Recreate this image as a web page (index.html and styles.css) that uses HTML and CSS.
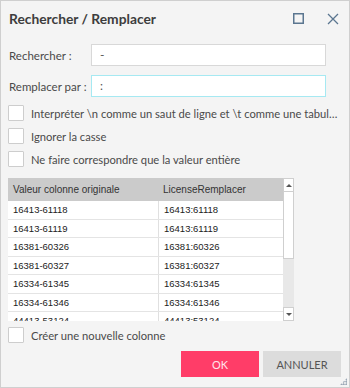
FILE: index.html
```html
<!DOCTYPE html>
<html lang="fr">
<head>
  <meta charset="UTF-8" />
  <title>Rechercher / Remplacer</title>
  <link rel="stylesheet" href="styles.css">
</head>
<body>
  <div class="dialog">
    <div class="titlebar">
      <h1>Rechercher / Remplacer</h1>
      <div class="win-btns">
        <svg width="11" height="11" viewBox="0 0 11 11"><rect x="0.75" y="0.75" width="9.5" height="9.5" fill="none" stroke="#5b7690" stroke-width="1.5"/></svg>
        <svg width="12" height="12" viewBox="0 0 12 12"><path d="M1 1L11 11M11 1L1 11" stroke="#5b7690" stroke-width="1.3"/></svg>
      </div>
    </div>

    <div class="field">
      <label>Rechercher :</label>
      <div class="input">-</div>
    </div>
    <div class="field">
      <label>Remplacer par :</label>
      <div class="input focus">:</div>
    </div>

    <div class="checks">
      <div class="check"><span class="box"></span><span class="txt">Interpréter \n comme un saut de ligne et \t comme une tabulation</span></div>
      <div class="check"><span class="box"></span><span class="txt">Ignorer la casse</span></div>
      <div class="check"><span class="box"></span><span class="txt">Ne faire correspondre que la valeur entière</span></div>
    </div>

    <div class="grid-wrap">
      <div class="grid">
        <div class="row head"><div>Valeur colonne originale</div><div>LicenseRemplacer</div></div>
        <div class="row"><div>16413-61118</div><div>16413:61118</div></div>
        <div class="row"><div>16413-61119</div><div>16413:61119</div></div>
        <div class="row"><div>16381-60326</div><div>16381:60326</div></div>
        <div class="row"><div>16381-60327</div><div>16381:60327</div></div>
        <div class="row"><div>16334-61345</div><div>16334:61345</div></div>
        <div class="row"><div>16334-61346</div><div>16334:61346</div></div>
        <div class="row"><div>44413-53124</div><div>44413:53124</div></div>
      </div>
      <div class="scrollbar">
        <div class="arrow up"></div>
        <div class="thumb"></div>
        <div class="track"></div>
        <div class="arrow down"></div>
      </div>
    </div>

    <div class="check new-col"><span class="box"></span><span class="txt">Créer une nouvelle colonne</span></div>

    <div class="actions">
      <button class="ok">OK</button>
      <button class="cancel">ANNULER</button>
    </div>
    <div class="grip"></div>
  </div>
</body>
</html>
```

FILE: styles.css
```css
* {
  margin: 0;
  padding: 0;
  box-sizing: border-box;
}

body {
  width: 350px;
  height: 388px;
  font-family: Lato, "Open Sans", sans-serif;
  color: #444;
  background: #fff;
}

.dialog {
  position: relative;
  width: 350px;
  height: 388px;
  border: 1px solid #cfcfcf;
  background: #f4f4f4;
  padding: 0 7px;
}

.titlebar {
  display: flex;
  align-items: center;
  justify-content: space-between;
  height: 35px;
  padding: 0 0 0 1px;
}

.titlebar h1 {
  font-size: 13.8px;
  font-weight: 700;
  color: #3d3d3d;
}

.win-btns {
  display: flex;
  align-items: center;
  gap: 23px;
  padding-right: 3px;
}

.field {
  display: flex;
  align-items: center;
  margin-top: 8px;
}

.field + .field {
  margin-top: 9px;
}

.field label {
  width: 83px;
  padding-left: 1px;
  font-size: 11.5px;
  color: #4a4a4a;
  white-space: nowrap;
}

.input {
  width: 235px;
  height: 22px;
  background: #fff;
  border: 1px solid #d8d8d8;
  font-size: 12px;
  line-height: 20px;
  padding-left: 8px;
  color: #555;
}

.input.focus {
  border-color: #a6e9f2;
}

.checks {
  display: flex;
  flex-direction: column;
  gap: 7px;
  margin-top: 8px;
}

.check {
  display: flex;
  align-items: center;
  gap: 7px;
  height: 16px;
}

.check .box {
  flex: none;
  width: 16px;
  height: 16px;
  background: #fff;
  border: 1px solid #cdcdcd;
  border-radius: 1px;
}

.check .txt {
  font-size: 11.2px;
  color: #4a4a4a;
  white-space: nowrap;
  overflow: hidden;
  text-overflow: ellipsis;
  width: 310px;
}

.grid-wrap {
  display: flex;
  margin-top: 11px;
  height: 143px;
  width: 286px;
}

.grid {
  width: 275px;
  overflow: hidden;
  font-family: "Liberation Sans", Arial, sans-serif;
  font-size: 9.5px;
  color: #222;
}

.row {
  display: grid;
  grid-template-columns: 150px 1fr;
  height: 18.5px;
  background: #fff;
  border-bottom: 1.5px solid #e4e4e4;
}

.row > div {
  display: flex;
  align-items: center;
  padding-left: 5px;
}

.row > div + div {
  border-left: 1px solid #e0e0e0;
}

.row.head {
  height: 23px;
  background: #cbcbcb;
  border-bottom: none;
  font-size: 10px;
  color: #333;
}

.row.head > div + div {
  border-left: none;
}

.scrollbar {
  width: 11px;
  margin-left: 0.5px;
  display: flex;
  flex-direction: column;
  background: #e8e8e8;
}

.arrow {
  height: 14px;
  background: #fff;
  border: 1px solid #cfcfcf;
  display: flex;
  align-items: center;
  justify-content: center;
}

.arrow::after {
  content: "";
  border-left: 3px solid transparent;
  border-right: 3px solid transparent;
}

.arrow.up::after {
  border-bottom: 3px solid #555;
}

.arrow.down::after {
  border-top: 3px solid #555;
}

.thumb {
  height: 67px;
  background: #fff;
  border: 1px solid #cfcfcf;
  border-top: none;
}

.track {
  flex: 1;
}

.new-col {
  margin-top: 6px;
}

.actions {
  display: flex;
  justify-content: flex-end;
  gap: 4px;
  margin-top: 8px;
  padding-right: 1px;
}

.actions button {
  width: 78px;
  height: 26px;
  border: none;
  font-family: Lato, "Open Sans", sans-serif;
  font-size: 11px;
}

.ok {
  background: #ff3d68;
  color: #ffe3ea;
}

.cancel {
  background: #dcdcdc;
  color: #555;
}

.grip {
  position: absolute;
  right: 2px;
  bottom: 2px;
  width: 7px;
  height: 7px;
  background-image: radial-gradient(circle, #8a9aaa 0.8px, transparent 1px);
  background-size: 2.5px 2.5px;
  clip-path: polygon(100% 0, 100% 100%, 0 100%);
}
```
